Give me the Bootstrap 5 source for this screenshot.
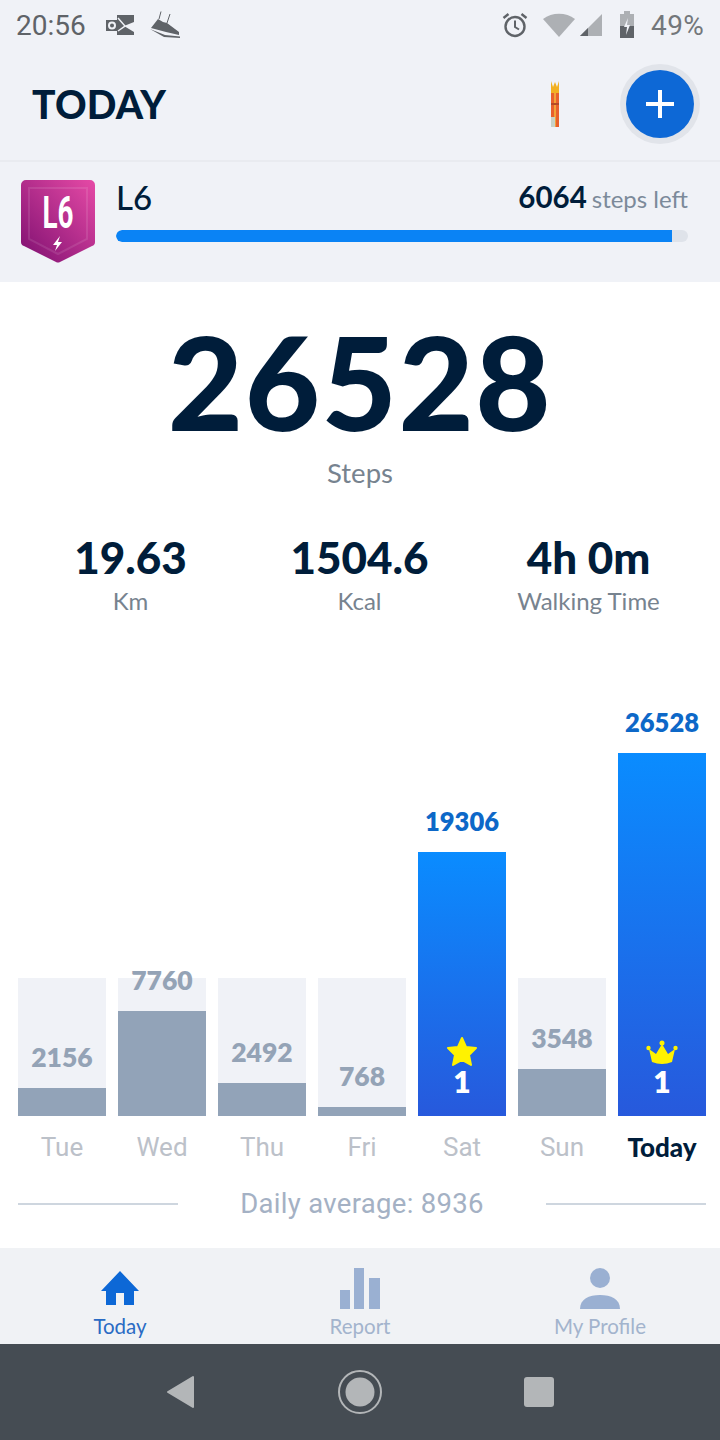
<!DOCTYPE html>
<html lang="en">
<head>
  <meta charset="UTF-8">
  <title>Today</title>
  <link href="https://cdn.jsdelivr.net/npm/bootstrap@5.3.0/dist/css/bootstrap.min.css" rel="stylesheet">
  <style>
    body { width: 720px; height: 1440px; overflow: hidden; background: #fff; font-family: Lato, "Liberation Sans", sans-serif; color: #001d3a; }
    .top-area { background: #f0f2f7; height: 282px; }
    .status-bar { height: 50px; padding: 0 16px 0 16px; color: #5f6368; font-family: Roboto, sans-serif; font-size: 28px; }
    .status-time { width: 89px; margin-top: 1px; }
    .status-pct { color: #73777b; letter-spacing: .3px; margin-left: 16px; margin-top: 1px; }
    .signal-gap { margin-left: 5px; }
    .wifi-gap { margin-left: 15px; }
    .head-bar { height: 112px; padding: 0 20px 2px 32px; border-bottom: 2px solid #e9ebf0; }
    .head-title { font-size: 39px; font-weight: 900; letter-spacing: .2px; line-height: 1; margin: 0; }
    .add-ring { width: 80px; height: 80px; border-radius: 50%; background: #e1e4ea; margin-left: 60px; }
    .add-btn { width: 68px; height: 68px; border-radius: 50%; background: #0d68d6; }
    .level-row { padding: 18px 32px 0 21px; }
    .level-body { margin-left: 21px; margin-top: -2px; }
    .level-name { font-size: 33px; line-height: 38px; font-weight: 500; }
    .level-left { font-size: 29.5px; line-height: 38px; font-weight: 700; }
    .level-left span { font-size: 24px; font-weight: 400; color: #7c8a9a; margin-left: 5px; }
    .level-track { height: 12px; border-radius: 6px; background: #dfe3ea; margin-top: 12px; overflow: hidden; }
    .level-fill { height: 12px; width: 556px; background: #0a83f5; border-radius: 6px 0 0 6px; }
    .steps-num { font-size: 130px; font-weight: 900; line-height: 130px; margin-top: 34px; letter-spacing: 1.5px; }
    .steps-lbl { font-size: 27.5px; line-height: 34px; color: #77838f; margin-top: 10px; }
    .stat-row { margin-top: 40px; padding: 0 16px; }
    .stat-cell { width: 229px; }
    .stat-num { font-size: 44px; font-weight: 900; line-height: 54px; }
    .stat-lbl { font-size: 24px; line-height: 32px; color: #77838f; margin-top: 1px; }
    .chart { height: 499px; padding: 0 14px 0 18px; gap: 12px; }
    .day-col { width: 88px; }
    .day-track { height: 138px; background: #f0f2f7; }
    .day-val { font-size: 26.5px; font-weight: 800; line-height: 30px; color: #94a3b6; margin-bottom: 16px; flex-shrink: 0; }
    .day-fill { background: #92a3b8; flex-shrink: 0; }
    .best-val { font-size: 25.5px; font-weight: 800; line-height: 30px; color: #0d68c8; margin-bottom: 16px; }
    .best-bar { background: linear-gradient(180deg, #0a8cff 0%, #2759dc 100%); color: #fff; font-size: 30px; font-weight: 800; line-height: 31px; padding-bottom: 19px; }
    .labels { padding: 0 14px 0 18px; gap: 12px; margin-top: 15px; }
    .day-lbl { width: 88px; font-family: Roboto, sans-serif; font-size: 26px; line-height: 32px; color: #bcc1c9; }
    .day-lbl-now { font-family: Lato, sans-serif; font-weight: 900; color: #001d3a; }
    .avg-row { padding: 0 14px 0 18px; margin-top: 25px; height: 32px; }
    .avg-line { height: 2px; width: 160px; background: #ced6df; }
    .avg-txt { font-family: Roboto, sans-serif; font-size: 27.5px; line-height: 32px; color: #a4b1c4; letter-spacing: .3px; }
    .tab-bar { height: 96px; background: #f0f2f5; margin-top: 28px; }
    .tab-item { width: 240px; padding-top: 19px; font-size: 20.5px; line-height: 26px; color: #a3b4cd; }
    .tab-now { color: #2a6bc4; }
    .tab-item svg { display: block; height: 44px; margin-bottom: 2px; }
    .sys-nav { height: 96px; background: #454c53; }
    .sys-icons { width: 387px; }
  </style>
</head>
<body>

  <div class="top-area">
    <!-- status bar -->
    <div class="status-bar d-flex align-items-center">
      <div class="status-time">20:56</div>
      <svg width="29" height="22" viewBox="0 0 29 22"><path fill="#5f6368" d="M12 1h17v7L19 12l10 6v3H12v-4H1V6h11z"/><circle cx="7" cy="11.500" r="3" fill="none" stroke="#f0f2f7" stroke-width="2"/><path d="M13 4l7 8-7 5" fill="none" stroke="#f0f2f7" stroke-width="1.500"/></svg>
      <svg class="ms-3" width="31" height="28" viewBox="0 0 31 28"><path fill="#5f6368" d="M1 17L8 8l5 3 4 1 12 9v3L16 21z"/><path fill="#5f6368" d="M0 18l15 6 15 1.500V27L14 26z"/><path d="M9 8l2-7.500M17 12l3-9" stroke="#5f6368" stroke-width="1" fill="none"/></svg>
      <div class="ms-auto d-flex align-items-center">
        <svg width="26" height="26" viewBox="0 0 26 26"><circle cx="13" cy="14.500" r="9.500" fill="none" stroke="#5f6368" stroke-width="2.400"/><path d="M13 8.500v6.500l4 2.500" fill="none" stroke="#5f6368" stroke-width="2"/><path d="M1.500 6l5-4M24.500 6l-5-4" stroke="#5f6368" stroke-width="2.400"/></svg>
        <svg class="wifi-gap" width="32" height="24" viewBox="0 0 32 24"><path fill="#adb0b4" d="M0 6C9-1 23-1 32 6L16 24z"/></svg>
        <svg class="signal-gap" width="23" height="23" viewBox="0 0 23 23"><path fill="#adb0b4" d="M0 22L22 0v22z"/><path fill="#5f6368" d="M0 22l8-8v8z"/></svg>
        <svg class="ms-3" width="16" height="28" viewBox="0 0 16 28"><path fill="#adb0b4" d="M5 0h6v3h4v13H1V3h4z"/><path fill="#5f6368" d="M1 15h14v12H1z"/><path fill="#f0f2f7" d="M9 7l-4 9h3l-1 8 4-10H8z"/></svg>
        <div class="status-pct">49%</div>
      </div>
    </div>

    <!-- header -->
    <div class="head-bar d-flex align-items-center">
      <h1 class="head-title">TODAY</h1>
      <svg class="ms-auto" width="10" height="46" viewBox="0 0 10 46"><path fill="#f2b021" d="M1 0l2 6 2-5 2 5 2-6v14H1z"/><path fill="#e8602c" d="M1 12h8v34H1z"/><path fill="#f2a33a" d="M4 12h2v34H4z"/><path fill="#b54a26" d="M1 22h8v2H1z"/><path fill="#c7d2c8" d="M1 36h4v10H1z"/></svg>
      <div class="add-ring d-flex align-items-center justify-content-center">
        <div class="add-btn d-flex align-items-center justify-content-center">
          <svg width="30" height="30" viewBox="0 0 30 30"><path d="M15 1v28M1 15h28" stroke="#fff" stroke-width="4"/></svg>
        </div>
      </div>
    </div>

    <!-- level -->
    <div class="level-row d-flex">
      <svg width="74" height="84" viewBox="0 0 74 84">
        <defs><linearGradient id="lvlGrad" x1="1" y1="0" x2="0" y2="1"><stop offset="0" stop-color="#e64aa6"/><stop offset="1" stop-color="#7d0f70"/></linearGradient></defs>
        <path fill="url(#lvlGrad)" d="M5 0h64a5 5 0 0 1 5 5v57q0 3-3 4L39 82q-2 1-4 0L3 66q-3-1-3-4V5a5 5 0 0 1 5-5z"/>
        <path fill="none" stroke="#fff" stroke-opacity=".1" stroke-width="2" d="M8 8h58v51L37 74 8 59z"/>
        <text x="37" y="48" text-anchor="middle" fill="#fff" font-family="Roboto, sans-serif" font-size="44" font-weight="700" textLength="31" lengthAdjust="spacingAndGlyphs">L6</text>
        <path fill="#fff" d="M39 56l-7 9h4l-2 6 7-9h-4z"/>
      </svg>
      <div class="level-body flex-grow-1">
        <div class="d-flex justify-content-between">
          <div class="level-name">L6</div>
          <div class="level-left">6064<span>steps left</span></div>
        </div>
        <div class="level-track"><div class="level-fill"></div></div>
      </div>
    </div>
  </div>

  <!-- totals -->
  <div class="text-center steps-num">26528</div>
  <div class="text-center steps-lbl">Steps</div>
  <div class="stat-row d-flex text-center">
    <div class="stat-cell"><div class="stat-num">19.63</div><div class="stat-lbl">Km</div></div>
    <div class="stat-cell"><div class="stat-num">1504.6</div><div class="stat-lbl">Kcal</div></div>
    <div class="stat-cell"><div class="stat-num">4h 0m</div><div class="stat-lbl">Walking Time</div></div>
  </div>

  <!-- week chart -->
  <div class="chart d-flex align-items-end" id="chart"></div>
  <div class="labels d-flex text-center">
    <div class="day-lbl">Tue</div>
    <div class="day-lbl">Wed</div>
    <div class="day-lbl">Thu</div>
    <div class="day-lbl">Fri</div>
    <div class="day-lbl">Sat</div>
    <div class="day-lbl">Sun</div>
    <div class="day-lbl day-lbl-now">Today</div>
  </div>

  <div class="avg-row d-flex align-items-center">
    <div class="avg-line"></div>
    <div class="avg-txt flex-grow-1 text-center">Daily average: 8936</div>
    <div class="avg-line"></div>
  </div>

  <!-- tabs -->
  <div class="tab-bar d-flex text-center">
    <div class="tab-item tab-now">
      <svg class="mx-auto" width="40" height="44" viewBox="0 0 40 44"><path fill="#0d68d6" d="M20 4l19 20h-5v14H24V26h-8v12H6V24H1z"/></svg>
      Today
    </div>
    <div class="tab-item">
      <svg class="mx-auto" width="40" height="44" viewBox="0 0 40 44"><path fill="#9ab0d2" d="M0 23h10v19H0zM14 1h10v41H14zM29 11h11v31H29z"/></svg>
      Report
    </div>
    <div class="tab-item">
      <svg class="mx-auto" width="40" height="44" viewBox="0 0 40 44"><circle cx="20" cy="11" r="10" fill="#9ab0d2"/><path fill="#9ab0d2" d="M0 42c0-10 9-14 20-14s20 4 20 14z"/></svg>
      My Profile
    </div>
  </div>

  <!-- android nav -->
  <div class="sys-nav d-flex align-items-center justify-content-center">
    <div class="d-flex align-items-center justify-content-between sys-icons">
      <svg width="30" height="34" viewBox="0 0 30 34"><path fill="#b3b6b8" stroke="#b3b6b8" stroke-width="2" stroke-linejoin="round" d="M1 17L26 2v30z"/></svg>
      <svg width="44" height="44" viewBox="0 0 44 44"><circle cx="22" cy="22" r="21" fill="none" stroke="#b3b6b8" stroke-width="2"/><circle cx="22" cy="22" r="14.500" fill="#b3b6b8"/></svg>
      <svg width="30" height="30" viewBox="0 0 30 30"><rect width="30" height="30" rx="3" fill="#b3b6b8"/></svg>
    </div>
  </div>

  <script src="https://cdn.jsdelivr.net/npm/bootstrap@5.3.0/dist/js/bootstrap.bundle.min.js"></script>
  <script>
    // week data: fill height in px is steps scaled to the grey track
    const days = [
      { val: 2156, h: 28 },
      { val: 7760, h: 105 },
      { val: 2492, h: 33 },
      { val: 768, h: 9 },
      { val: 19306, h: 264, best: 'star' },
      { val: 3548, h: 47 },
      { val: 26528, h: 363, best: 'crown' }
    ];
    const marks = {
      star: '<svg width="32" height="30" viewBox="0 0 32 30"><path fill="#fff200" stroke="#fff200" stroke-width="2" stroke-linejoin="round" d="M16 2l4 9 10 1-7 7 2 10-9-5-9 5 2-10-7-7 10-1z"/></svg>',
      crown: '<svg width="32" height="26" viewBox="0 0 32 26"><path fill="#fff200" d="M6 22L3 9l7 5 6-10 6 10 7-5-3 13q-10 4-20 0z"/><circle cx="16" cy="3" r="2.500" fill="#fff200"/><circle cx="2.500" cy="8" r="2.200" fill="#fff200"/><circle cx="29.500" cy="8" r="2.200" fill="#fff200"/></svg>'
    };
    document.getElementById('chart').innerHTML = days.map(d => d.best ? `
      <div class="day-col text-center">
        <div class="best-val">${d.val}</div>
        <div class="best-bar d-flex flex-column justify-content-end align-items-center" style="height:${d.h}px">${marks[d.best]}<div>1</div></div>
      </div>` : `
      <div class="day-col day-track d-flex flex-column justify-content-end text-center">
        <div class="day-val">${d.val}</div>
        <div class="day-fill" style="height:${d.h}px"></div>
      </div>`).join('');
  </script>
</body>
</html>
